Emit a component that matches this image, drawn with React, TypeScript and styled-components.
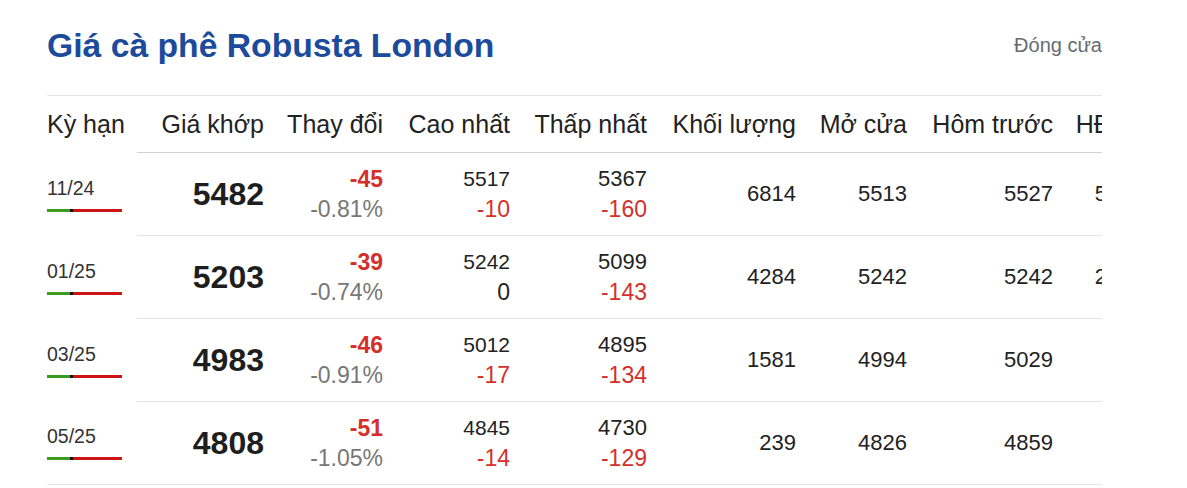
import React from "react";
import styled, { createGlobalStyle } from "styled-components";

const GlobalStyle = createGlobalStyle`
  html, body {
    margin: 0;
    padding: 0;
    background: #fff;
  }
  body {
    font-family: "Liberation Sans", Arial, sans-serif;
    color: #222;
  }
`;

interface Row {
  term: string;
  price: number;
  chg: number;
  pct: string;
  high: number;
  highChg: number;
  low: number;
  lowChg: number;
  vol: number;
  open: number;
  prev: number;
  oi: string;
}

const rows: Row[] = [
  { term: "11/24", price: 5482, chg: -45, pct: "-0.81%", high: 5517, highChg: -10, low: 5367, lowChg: -160, vol: 6814, open: 5513, prev: 5527, oi: "55860" },
  { term: "01/25", price: 5203, chg: -39, pct: "-0.74%", high: 5242, highChg: 0, low: 5099, lowChg: -143, vol: 4284, open: 5242, prev: 5242, oi: "24170" },
  { term: "03/25", price: 4983, chg: -46, pct: "-0.91%", high: 5012, highChg: -17, low: 4895, lowChg: -134, vol: 1581, open: 4994, prev: 5029, oi: "9871" },
  { term: "05/25", price: 4808, chg: -51, pct: "-1.05%", high: 4845, highChg: -14, low: 4730, lowChg: -129, vol: 239, open: 4826, prev: 4859, oi: "2750" },
];

// độ rộng cột (px), tính theo mép phải của chữ trong ảnh
const colWidths = [90, 139, 119, 127, 137, 149, 111, 146, 103];
const headers = ["Kỳ hạn", "Giá khớp", "Thay đổi", "Cao nhất", "Thấp nhất", "Khối lượng", "Mở cửa", "Hôm trước", "HĐ mở"];

const App: React.FC = () => {
  return (
    <>
      <GlobalStyle />
      <Page>
        <TitleBar>
          <Title>Giá cà phê Robusta London</Title>
          <Status>Đóng cửa</Status>
        </TitleBar>
        <TableWrap>
          <Table>
            <colgroup>
              {colWidths.map((w, i) => (
                <col key={i} style={{ width: w }} />
              ))}
            </colgroup>
            <thead>
              <tr>
                {headers.map((h, i) => (
                  <HeadCell key={h} $first={i === 0}>
                    {h}
                  </HeadCell>
                ))}
              </tr>
            </thead>
            <tbody>
              {rows.map((r, idx) => {
                const last = idx === rows.length - 1;
                return (
                  <tr key={r.term}>
                    <Cell $first $last={last}>
                      <TermText>{r.term}</TermText>
                      <RangeBar>
                        <Seg $color="#3c9a1e" $w={23} />
                        <Seg $color="#111" $w={3} />
                        <Seg $color="#cc1414" $w={49} />
                      </RangeBar>
                    </Cell>
                    <Cell $last={last}>
                      <Price>{r.price}</Price>
                    </Cell>
                    <Cell $last={last}>
                      <ChangeMain>{r.chg}</ChangeMain>
                      <ChangeSub>{r.pct}</ChangeSub>
                    </Cell>
                    <Cell $last={last}>
                      <TopNum $small>{r.high}</TopNum>
                      <DiffNum $neg={r.highChg < 0}>{r.highChg}</DiffNum>
                    </Cell>
                    <Cell $last={last}>
                      <TopNum>{r.low}</TopNum>
                      <DiffNum $neg={r.lowChg < 0}>{r.lowChg}</DiffNum>
                    </Cell>
                    <Cell $last={last}>
                      <Num>{r.vol}</Num>
                    </Cell>
                    <Cell $last={last}>
                      <Num>{r.open}</Num>
                    </Cell>
                    <Cell $last={last}>
                      <Num>{r.prev}</Num>
                    </Cell>
                    <Cell $last={last}>
                      <Num>{r.oi}</Num>
                    </Cell>
                  </tr>
                );
              })}
            </tbody>
          </Table>
        </TableWrap>
      </Page>
    </>
  );
};

const Page = styled.div`
  padding: 25px 0 0 47px;
  width: 1055px;
`;

const TitleBar = styled.div`
  display: flex;
  justify-content: space-between;
  align-items: center;
  height: 40px;
  margin-bottom: 30px;
`;

const Title = styled.h1`
  margin: 0;
  font-size: 33.7px;
  line-height: 40px;
  font-weight: 700;
  color: #1c4b9b;
`;

const Status = styled.span`
  font-size: 20px;
  line-height: 24px;
  color: #666b73;
`;

const TableWrap = styled.div`
  width: 1055px;
  overflow: hidden;
`;

const Table = styled.table`
  width: 1121px;
  table-layout: fixed;
  border-collapse: collapse;
  border-spacing: 0;
`;

const HeadCell = styled.th<{ $first?: boolean }>`
  height: 56px;
  padding: 0 ${(p) => (p.$first ? "0" : "12px")} 0 0;
  font-size: 25px;
  font-weight: 400;
  color: #222;
  white-space: nowrap;
  text-align: ${(p) => (p.$first ? "left" : "right")};
  vertical-align: middle;
  border-top: 1px solid #e3e6e8;
  border-bottom: ${(p) => (p.$first ? "none" : "1px solid #cfd2d4")};
`;

const Cell = styled.td<{ $first?: boolean; $last?: boolean }>`
  height: 82px;
  padding: 0 ${(p) => (p.$first ? "0" : "12px")} 0 0;
  text-align: ${(p) => (p.$first ? "left" : "right")};
  vertical-align: middle;
  white-space: nowrap;
  border-bottom: ${(p) => (p.$first && !p.$last ? "none" : "1px solid #e2e4e6")};
`;

const TermText = styled.div`
  font-size: 19.5px;
  line-height: 22px;
  color: #333;
`;

const RangeBar = styled.div`
  display: flex;
  margin-top: 10px;
  height: 3px;
`;

const Seg = styled.span<{ $color: string; $w: number }>`
  display: block;
  width: ${(p) => p.$w}px;
  height: 3px;
  background: ${(p) => p.$color};
`;

const Price = styled.div`
  font-size: 32px;
  font-weight: 700;
  line-height: 38px;
  color: #1e1e1e;
`;

const ChangeMain = styled.div`
  font-size: 23px;
  font-weight: 700;
  line-height: 30px;
  color: #d3302b;
`;

const ChangeSub = styled.div`
  font-size: 23px;
  line-height: 30px;
  color: #777;
`;

const TopNum = styled.div<{ $small?: boolean }>`
  font-size: ${(p) => (p.$small ? "21px" : "22px")};
  line-height: 30px;
  color: #222;
`;

const DiffNum = styled.div<{ $neg?: boolean }>`
  font-size: 23px;
  line-height: 30px;
  color: ${(p) => (p.$neg ? "#d3302b" : "#222")};
`;

const Num = styled.div`
  font-size: 22px;
  line-height: 30px;
  color: #222;
`;

export default App;
